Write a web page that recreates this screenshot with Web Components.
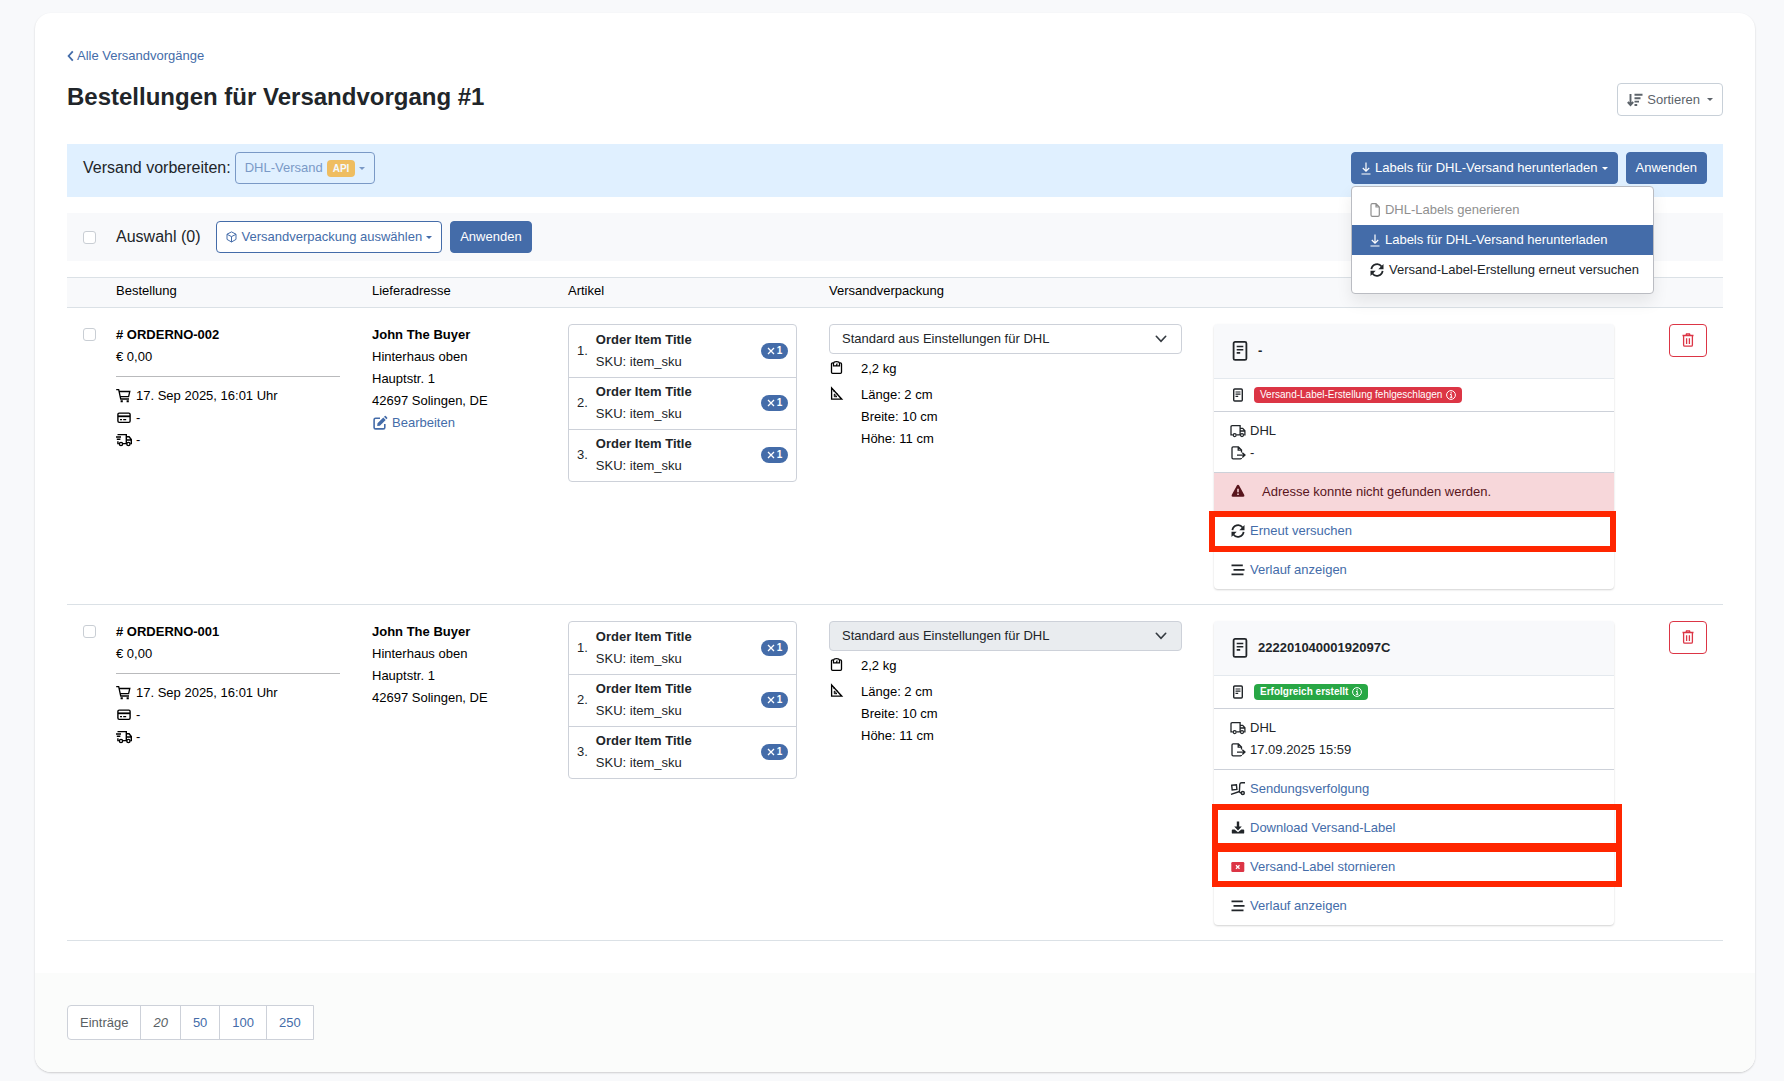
<!DOCTYPE html>
<html lang="de">
<head>
<meta charset="utf-8">
<title>Bestellungen für Versandvorgang #1</title>
<style>
  body {
    --primary: #446ca9;
    --danger: #dc3545;
    --line: #dbe1e6;
    --line-dark: #cdd1d9;
    --soft: #f8f9fb;
    margin: 0;
    padding: 13px 29px 8px 35px;
    background: #f8f9fb;
    color: #212529;
    font: 13px/22px "Liberation Sans", Arial, sans-serif;
  }
</style>
</head>
<body>
<shipping-page></shipping-page>

<script>
// [width, height, markup]
const ICONS = {
  back: [7, 12, '<path d="M5.800 1.300 1.600 6l4.200 4.700" fill="none" stroke="currentColor" stroke-width="1.800"/>'],
  sort: [16, 14, '<path d="M3.500 1v11M.8 9l2.700 3 2.700-3" fill="none" stroke="currentColor" stroke-width="1.900"/><path d="M7.500 1.800h8M7.500 5.200h6M7.500 8.600h4.500M7.500 12h2.700" stroke="currentColor" stroke-width="1.900"/>'],
  box: [11, 12, '<path d="M5.500.9 10 3.200v5.200L5.500 11 1 8.400V3.200zM1 3.300l4.500 2.300L10 3.300M5.500 5.600V11" fill="none" stroke="currentColor" stroke-width="1" stroke-linejoin="round"/>'],
  file: [10, 14, '<path d="M1 2q0-1.300 1.300-1.300H6L9.300 4v8q0 1.300-1.300 1.300H2.300Q1 13.300 1 12zM6 .7V4h3.300" fill="none" stroke="currentColor" stroke-width="1.200"/>'],
  fetch: [10, 13, '<path d="M5 .5v8.500M1.800 6 5 9.200 8.200 6M.5 12h9" fill="none" stroke="currentColor" stroke-width="1.200"/>'],
  refresh: [14, 14, '<path d="M1.400 6.200A5.700 5.700 0 0 1 11.600 3.500M12.600 7.800A5.700 5.700 0 0 1 2.400 10.500" fill="none" stroke="currentColor" stroke-width="1.800"/><path d="M13.500 1v5.200H8.300zM.5 13V7.800h5.200z" fill="currentColor"/>'],
  cart: [16, 16, '<path d="M.2 1.700h2.500l2 9.300h8.300M3.200 3.500h10.600L12.600 8.700H4.300" fill="none" stroke="currentColor" stroke-width="1.300"/><path d="M4.600 13.300h2.200M10.600 13.300h2.200" stroke="currentColor" stroke-width="2"/>'],
  payment: [16, 16, '<rect x="1.900" y="3.100" width="12.200" height="9.300" rx="1.300" fill="none" stroke="currentColor" stroke-width="1.400"/><path d="M2 6.300h12" stroke="currentColor" stroke-width="1.800"/><path d="M4 9.700h2M7.200 9.700h3" stroke="currentColor" stroke-width="1.300"/>'],
  express: [16, 16, '<path d="M1.500 2.600h8.800v9H7M0 5h5M.8 7.300h3.600M1.900 9.300v2.300h1M10.500 4.700h2.600l2.200 2.800v4.100h-1M10.500 8h4.800" fill="none" stroke="currentColor" stroke-width="1.400"/><circle cx="5" cy="12" r="1.600" fill="none" stroke="currentColor" stroke-width="1.400"/><circle cx="12.400" cy="12" r="1.600" fill="none" stroke="currentColor" stroke-width="1.400"/>'],
  truck: [16, 16, '<path d="M2.700 11.900H1V3.700Q1 2.600 2.100 2.600h8v9.300H6.700M10.100 5.300h2.600l2.200 2.500v4.100h-.8M10.100 8h4.800" fill="none" stroke="currentColor" stroke-width="1.300"/><circle cx="4.700" cy="12.100" r="1.500" fill="none" stroke="currentColor" stroke-width="1.300"/><circle cx="12" cy="12.100" r="1.500" fill="none" stroke="currentColor" stroke-width="1.300"/>'],
  edit: [16, 16, '<path d="M8 3.200H3.600q-1.500 0-1.500 1.500v7.700q0 1.500 1.500 1.500h7.700q1.500 0 1.500-1.500V9" fill="none" stroke="currentColor" stroke-width="1.600"/><path d="m5.500 8.300 5.800-5.800 2.400 2.400-5.800 5.800-2.700.4zM12 1.800l.8-.8q.5-.4 1 0l1.400 1.400q.4.500 0 1l-.8.800z" fill="currentColor"/>'],
  weight: [16, 16, '<path d="M4.300 2.900H3.600q-1.100 0-1.100 1.100v8.300q0 1.100 1.100 1.100h7.800q1.100 0 1.100-1.100V4q0-1.100-1.100-1.100h-.7" fill="none" stroke="currentColor" stroke-width="1.300"/><path d="M4.500 5.800V3.500Q4.700 1.700 7.500 1.700t3 1.800v2.300zM7.300 5.500l1-2" fill="none" stroke="currentColor" stroke-width="1.200"/>'],
  ruler: [16, 16, '<path d="M2.600 2v11.200h10.200z" fill="none" stroke="currentColor" stroke-width="1.300"/><path d="M5.300 8v2.700H8zM4.500 5.400l1.200-.8M7.200 8.300l1-1M10 11l1-1" fill="none" stroke="currentColor" stroke-width="1"/>'],
  label: [16, 22, '<rect x="1.600" y="1.900" width="12.800" height="18" rx="1.500" fill="none" stroke="currentColor" stroke-width="1.800"/><path d="M4.700 6.500h6.600M4.700 9.700h6.600M4.700 12.900h3.500" stroke="currentColor" stroke-width="1.600"/>'],
  labelsmall: [16, 16, '<rect x="3.700" y="2" width="8.600" height="12" rx="1" fill="none" stroke="currentColor" stroke-width="1.400"/><path d="M5.500 5h5M5.500 7.200h5M5.500 9.400h2.700" stroke="currentColor" stroke-width="1.200"/>'],
  info: [10, 10, '<circle cx="5" cy="5" r="4.400" fill="none" stroke="currentColor" stroke-width="1"/><path d="M4 4.500h1.300v2.800M3.800 7.300h2.600" fill="none" stroke="currentColor" stroke-width="1"/><path d="M4.500 2.800h1.300" stroke="currentColor" stroke-width="1.200"/>'],
  sent: [16, 16, '<path d="M11.500 7.500V4.900L8.400 1.800H3.100q-1.100 0-1.100 1.100v9.900q0 1.100 1.100 1.100h7.300q1.100 0 1.100-.8M8.200 2v3.200h3.300" fill="none" stroke="currentColor" stroke-width="1.300"/><path d="M7 10.100h7.300M12.300 7.700l2.600 2.400-2.600 2.400" fill="none" stroke="currentColor" stroke-width="1.400"/>'],
  warning: [16, 16, '<path d="M8 .7q.6 0 1 .6l5.300 9.800q.6 1.500-1 1.600H2.700q-1.600-.1-1-1.600L7 1.300q.4-.6 1-.6z" fill="currentColor"/><path d="M8 4.700v3.500M8 9.500V11" stroke="#f7d7da" stroke-width="1.500"/>'],
  history: [16, 16, '<path d="M1.500 3.400h11.300M3.500 7.900h11M1.500 12.400h12" stroke="currentColor" stroke-width="1.700"/>'],
  track: [16, 16, '<path d="m1.700 4.300 4.700-.6.500 4.700-4.700.6zM15 1.800h-3.300q-1.700 0-1.900 1.500l-.4 7.200q0 1.300 2.300 1.500M1 13.300l8.500-2.800" fill="none" stroke="currentColor" stroke-width="1.400"/><circle cx="12.800" cy="12" r="1.500" fill="none" stroke="currentColor" stroke-width="1.400"/>'],
  download: [16, 16, '<path d="M6.800 1.500h2.400v5h2.600L8 10.500 4.200 6.500h2.600z" fill="currentColor"/><path d="M2.700 9.500h2L8 12.300l3.300-2.800h2q.9 0 .9.700v2.700q0 .7-.9.700H2.700q-.9 0-.9-.7v-2.700q0-.7.9-.7z" fill="currentColor"/>'],
  cancel: [16, 16, '<rect x="1.300" y="3" width="13" height="10" rx="1.200" fill="#dc3545"/><path d="m6 6.300 3.500 3.500M9.500 6.300 6 9.800" stroke="#fff" stroke-width="1.300"/>'],
  trash: [12, 14, '<path d="M.5 2.500h11M4 2.500l.5-1.600h3L8 2.500" fill="none" stroke="currentColor" stroke-width="1.400"/><path d="M1.600 3v8.900q0 1.300 1.200 1.300h6.400q1.200 0 1.200-1.300V3M4.600 5.200v5.800M7.400 5.200v5.800" fill="none" stroke="currentColor" stroke-width="1.300"/>'],
  times: [8, 8, '<path d="m1 1 6 6M7 1 1 7" stroke="currentColor" stroke-width="1.300"/>'],
  chevron: [12, 8, '<path d="m1.300 1.300 4.700 5 4.700-5" fill="none" stroke="#343a40" stroke-width="1.600" stroke-linecap="round"/>'],
};

const ORDERS = [
  {
    number: 'ORDERNO-002',
    editable: true,
    tracking: '-',
    status: 'danger',
    statusText: 'Versand-Label-Erstellung fehlgeschlagen',
    sent: '-',
    error: 'Adresse konnte nicht gefunden werden.',
    actions: [
      { icon: 'refresh', text: 'Erneut versuchen', mark: '-1px -2px -2px -5px' },
      { icon: 'history', text: 'Verlauf anzeigen' },
    ],
  },
  {
    number: 'ORDERNO-001',
    editable: false,
    tracking: '22220104000192097C',
    status: 'success',
    statusText: 'Erfolgreich erstellt',
    sent: '17.09.2025 15:59',
    actions: [
      { icon: 'track', text: 'Sendungsverfolgung' },
      { icon: 'download', text: 'Download Versand-Label', mark: '-5px -8px -2px -2px' },
      { icon: 'cancel', text: 'Versand-Label stornieren', mark: '-2px -8px -1px -2px' },
      { icon: 'history', text: 'Verlauf anzeigen' },
    ],
  },
];

class AppIcon extends HTMLElement {
  constructor() {
    super();
    this.attachShadow({ mode: 'open' });
  }

  connectedCallback() {
    const [width, height, markup] = ICONS[this.getAttribute('name')];
    this.shadowRoot.innerHTML = `
      <style>
        :host { display: inline-flex; flex: none; }
        svg { display: block; }
      </style>
      <svg width="${width}" height="${height}" viewBox="0 0 ${width} ${height}" aria-hidden="true">${markup}</svg>
    `;
  }
}

class AppButton extends HTMLElement {
  constructor() {
    super();
    this.attachShadow({ mode: 'open' });
  }

  connectedCallback() {
    const disabled = this.hasAttribute('disabled') ? 'disabled' : '';
    const menu = this.hasAttribute('caret') ? 'aria-haspopup="true"' : '';
    const label = this.hasAttribute('label') ? `aria-label="${this.getAttribute('label')}"` : '';
    this.shadowRoot.innerHTML = `
      <style>
        :host { display: inline-flex; flex: none; }
        button {
          display: flex;
          align-items: center;
          gap: 4px;
          box-sizing: border-box;
          height: 32px;
          padding: 0 9px;
          border: 1px solid var(--primary);
          border-radius: 4px;
          background: #fff;
          color: var(--primary);
          font: inherit;
          white-space: nowrap;
        }
        button:disabled { opacity: 0.65; background: transparent; }
        :host([variant=primary]) button { background: var(--primary); color: #fff; }
        :host([variant=muted]) button { height: 33px; border-color: #c8d0d8; color: #5c636a; }
        :host([variant=danger]) button {
          height: 33px;
          padding: 0 12px 2px;
          border-color: var(--danger);
          color: var(--danger);
        }
        .caret {
          border: 3px solid transparent;
          border-top-color: currentColor;
          border-bottom: 0;
        }
        :host([variant=muted]) .caret { margin-left: 3px; }
      </style>
      <button type="button" ${disabled} ${menu} ${label}>
        <slot></slot>${menu ? '<span class="caret"></span>' : ''}
      </button>
    `;
  }
}

class AppCheckbox extends HTMLElement {
  constructor() {
    super();
    this.attachShadow({ mode: 'open' });
  }

  connectedCallback() {
    this.shadowRoot.innerHTML = `
      <style>
        :host { display: block; flex: none; }
        input {
          display: block;
          appearance: none;
          box-sizing: border-box;
          width: 13px;
          height: 13px;
          margin: 0;
          border: 1px solid #c9ced4;
          border-radius: 3px;
          background: #fff;
        }
        input:checked { background: var(--primary); }
      </style>
      <input type="checkbox" aria-label="${this.getAttribute('label')}">
    `;
  }
}

class ActionMenu extends HTMLElement {
  constructor() {
    super();
    this.attachShadow({ mode: 'open' });
    this.shadowRoot.innerHTML = `
      <style>
        :host { display: block; position: relative; }
        .menu {
          position: absolute;
          z-index: 2;
          top: 34px;
          left: 0;
          padding: 8px 0;
          border: 1px solid #babcc2;
          border-radius: 4px;
          background: #fff;
          box-shadow: 0 8px 16px rgba(0, 0, 0, 0.08);
        }
        .menu button {
          display: flex;
          align-items: center;
          gap: 5px;
          width: 100%;
          height: 30px;
          padding: 0 14px 0 18px;
          border: 0;
          background: none;
          color: #212529;
          font: inherit;
          white-space: nowrap;
        }
        .menu button:disabled { color: #8f8f8f; }
        .menu .active { background: var(--primary); color: #fff; }
      </style>
      <app-button variant="primary" caret><app-icon name="fetch"></app-icon> Labels für DHL-Versand herunterladen</app-button>
      <div class="menu" role="menu">
        <button type="button" role="menuitem" disabled><app-icon name="file"></app-icon>DHL-Labels generieren</button>
        <button type="button" role="menuitem" class="active"><app-icon name="fetch"></app-icon>Labels für DHL-Versand herunterladen</button>
        <button type="button" role="menuitem"><app-icon name="refresh"></app-icon>Versand-Label-Erstellung erneut versuchen</button>
      </div>
    `;
  }
}

class OrderInfo extends HTMLElement {
  constructor() {
    super();
    this.attachShadow({ mode: 'open' });
  }

  connectedCallback() {
    this.shadowRoot.innerHTML = `
      <style>
        :host { display: block; }
        hr { margin: 8px 0; border: 0; border-top: 1px solid #b9babc; }
        .line { display: flex; align-items: center; gap: 4px; }
      </style>
      <strong># ${this.getAttribute('number')}</strong>
      <div>€ 0,00</div>
      <hr>
      <div class="line"><app-icon name="cart"></app-icon>17. Sep 2025, 16:01 Uhr</div>
      <div class="line"><app-icon name="payment"></app-icon>-</div>
      <div class="line"><app-icon name="express"></app-icon>-</div>
    `;
  }
}

class AddressBlock extends HTMLElement {
  constructor() {
    super();
    this.attachShadow({ mode: 'open' });
  }

  connectedCallback() {
    this.shadowRoot.innerHTML = `
      <style>
        :host { display: block; }
        a { display: flex; align-items: center; gap: 4px; color: var(--primary); text-decoration: none; }
      </style>
      <strong>John The Buyer</strong>
      <div>Hinterhaus oben</div>
      <div>Hauptstr. 1</div>
      <div>42697 Solingen, DE</div>
      ${this.hasAttribute('editable') ? '<a href="#"><app-icon name="edit"></app-icon>Bearbeiten</a>' : ''}
    `;
  }
}

class ArticleList extends HTMLElement {
  constructor() {
    super();
    this.attachShadow({ mode: 'open' });
    const items = [1, 2, 3].map((pos) => `
      <li>
        <span>${pos}.</span>
        <div class="text"><strong>Order Item Title</strong><div>SKU: item_sku</div></div>
        <span class="badge"><app-icon name="times"></app-icon>1</span>
      </li>
    `).join('');
    this.shadowRoot.innerHTML = `
      <style>
        :host { display: block; color: #212529; }
        ul { margin: 0; padding: 0; list-style: none; border: 1px solid var(--line-dark); border-radius: 4px; }
        li { display: flex; align-items: center; gap: 8px; padding: 4px 8px; }
        li + li { padding-top: 3px; border-top: 1px solid var(--line-dark); }
        .text { flex: 1; }
        .badge {
          display: flex;
          align-items: center;
          justify-content: center;
          gap: 2px;
          width: 27px;
          height: 16px;
          border-radius: 8px;
          background: var(--primary);
          color: #fff;
          font-size: 10px;
          font-weight: bold;
        }
      </style>
      <ul>${items}</ul>
    `;
  }
}

class PackagingInfo extends HTMLElement {
  constructor() {
    super();
    this.attachShadow({ mode: 'open' });
  }

  connectedCallback() {
    const disabled = this.hasAttribute('disabled') ? 'disabled' : '';
    this.shadowRoot.innerHTML = `
      <style>
        :host { display: block; }
        .select { position: relative; margin-bottom: 4px; }
        select {
          display: block;
          appearance: none;
          box-sizing: border-box;
          width: 100%;
          height: 30px;
          padding: 0 36px 0 12px;
          border: 1px solid var(--line-dark);
          border-radius: 4px;
          background: #fff;
          color: #212529;
          font: inherit;
        }
        select:disabled { background: #e9ecef; opacity: 1; }
        .select app-icon { position: absolute; top: 11px; right: 15px; pointer-events: none; }
        .line { display: flex; gap: 16px; margin-bottom: 4px; }
        .line app-icon { padding-top: 2px; }
      </style>
      <div class="select">
        <select aria-label="Versandverpackung" ${disabled}><option>Standard aus Einstellungen für DHL</option></select>
        <app-icon name="chevron"></app-icon>
      </div>
      <div class="line"><app-icon name="weight"></app-icon><div>2,2 kg</div></div>
      <div class="line">
        <app-icon name="ruler"></app-icon>
        <div><div>Länge: 2 cm</div><div>Breite: 10 cm</div><div>Höhe: 11 cm</div></div>
      </div>
    `;
  }
}

class ShipmentCard extends HTMLElement {
  constructor() {
    super();
    this.attachShadow({ mode: 'open' });
  }

  /**
   * @param {any} value
   */
  set order(value) {
    const error = value.error
      ? `<div class="row alert"><app-icon name="warning"></app-icon>${value.error}</div>` : '';
    const actions = value.actions.map((action) => `
      <div class="row">
        <app-icon name="${action.icon}"></app-icon><a href="#">${action.text}</a>
        ${action.mark ? `<span class="mark" style="inset: ${action.mark}"></span>` : ''}
      </div>
    `).join('');
    this.shadowRoot.innerHTML = `
      <style>
        :host {
          display: block;
          border-radius: 4px;
          background: #fff;
          color: #212529;
          box-shadow: 0 1px 2px rgba(0, 0, 0, 0.18);
        }
        .head, .status, .row, .line { display: flex; align-items: center; }
        .head {
          gap: 10px;
          padding: 16px 16px 16px 18px;
          border-bottom: 1px solid #e4e9ee;
          border-radius: 4px 4px 0 0;
          background: var(--soft);
          font-weight: bold;
        }
        .status { gap: 8px; padding: 8px 16px; border-bottom: 1px solid var(--line-dark); }
        .badge {
          display: flex;
          align-items: center;
          gap: 4px;
          height: 16px;
          padding: 0 6px;
          border-radius: 4px;
          background: var(--danger);
          color: #fff;
          font-size: 10px;
        }
        .badge.success { background: #28a745; font-weight: bold; }
        .carrier { padding: 8px 16px; border-bottom: 1px solid var(--line-dark); }
        .line { gap: 4px; }
        .row { position: relative; gap: 4px; padding: 8px 16px; }
        .row + .row { border-top: 1px solid transparent; }
        .row app-icon { width: 16px; justify-content: center; }
        .alert { gap: 16px; background: #f7d7da; color: #58151c; }
        a { color: var(--primary); text-decoration: none; }
        .mark { position: absolute; z-index: 1; border: 6px solid #ff2600; pointer-events: none; }
      </style>
      <div class="head"><app-icon name="label"></app-icon>${value.tracking}</div>
      <div class="status">
        <app-icon name="labelsmall"></app-icon>
        <span class="badge ${value.status}">${value.statusText}<app-icon name="info"></app-icon></span>
      </div>
      <div class="carrier">
        <div class="line"><app-icon name="truck"></app-icon>DHL</div>
        <div class="line"><app-icon name="sent"></app-icon>${value.sent}</div>
      </div>
      ${error}${actions}
    `;
  }
}

class OrderTable extends HTMLElement {
  constructor() {
    super();
    this.attachShadow({ mode: 'open' });
    this.shadowRoot.innerHTML = `
      <style>
        :host { display: block; color: #000; }
        table { width: 100%; table-layout: fixed; border-collapse: separate; border-spacing: 0; }
        th {
          padding: 2px 16px 5px;
          border-top: 1px solid var(--line);
          border-bottom: 1px solid var(--line);
          background: var(--soft);
          font-weight: normal;
          text-align: left;
        }
        td { padding: 16px 16px 15px; border-bottom: 1px solid var(--line); vertical-align: top; }
        td:first-child { padding: 20px 0 0 16px; }
        td:last-child { text-align: right; }
      </style>
      <table>
        <colgroup>
          <col style="width: 33px"><col style="width: 256px"><col style="width: 196px">
          <col style="width: 261px"><col style="width: 385px"><col style="width: 432px"><col style="width: 93px">
        </colgroup>
        <thead>
          <tr><th></th><th>Bestellung</th><th>Lieferadresse</th><th>Artikel</th><th>Versandverpackung</th><th></th><th></th></tr>
        </thead>
        <tbody></tbody>
      </table>
    `;
    this.$body = this.shadowRoot.querySelector('tbody');
  }

  connectedCallback() {
    ORDERS.forEach((order) => {
      const row = document.createElement('tr');
      row.innerHTML = `
        <td><app-checkbox label="${order.number}"></app-checkbox></td>
        <td><order-info number="${order.number}"></order-info></td>
        <td><address-block ${order.editable ? 'editable' : ''}></address-block></td>
        <td><article-list></article-list></td>
        <td><packaging-info ${order.editable ? '' : 'disabled'}></packaging-info></td>
        <td><shipment-card></shipment-card></td>
        <td><app-button variant="danger" label="Löschen"><app-icon name="trash"></app-icon></app-button></td>
      `;
      this.$body.appendChild(row);
      row.querySelector('shipment-card').order = order;
    });
  }
}

class PageSize extends HTMLElement {
  constructor() {
    super();
    this.attachShadow({ mode: 'open' });
    this.shadowRoot.innerHTML = `
      <style>
        :host { display: flex; }
        ul {
          display: flex;
          margin: 0;
          padding: 0;
          list-style: none;
          border: 1px solid var(--line-dark);
          border-radius: 4px 0 0 4px;
          background: #fff;
          color: #5a5f64;
          line-height: 33px;
        }
        li { padding: 0 12px; }
        li + li { border-left: 1px solid var(--line-dark); }
        a { color: var(--primary); text-decoration: none; }
      </style>
      <ul>
        <li>Einträge</li>
        <li><em>20</em></li>
        <li><a href="#">50</a></li>
        <li><a href="#">100</a></li>
        <li><a href="#">250</a></li>
      </ul>
    `;
  }
}

const template = document.createElement('template');
template.innerHTML = `
  <style>
    :host {
      display: block;
      border-radius: 16px;
      background: #fff;
      box-shadow: 0 1px 2px rgba(0, 0, 0, 0.18);
    }
    main { padding: 32px; }
    .back { display: inline-flex; align-items: center; gap: 3px; color: var(--primary); text-decoration: none; }
    header { display: flex; justify-content: space-between; margin: 14px 0 28px; }
    h1 { margin: 0; font-size: 24px; line-height: 28px; }
    .bar {
      display: flex;
      align-items: flex-start;
      gap: 8px;
      box-sizing: border-box;
      margin-bottom: 16px;
      padding: 8px 16px;
      font-size: 16px;
      line-height: 32px;
    }
    .bar app-button, .bar action-menu { font-size: 13px; line-height: 22px; }
    .prepare { min-height: 53px; background: #e0f0ff; }
    .prepare .title { flex: 1; display: flex; gap: 4px; }
    .selection { align-items: center; background: var(--soft); }
    .selection .title { margin: 0 8px 0 12px; }
    .api {
      padding: 0 6px;
      border-radius: 4px;
      background: #f7a30c;
      color: #fff;
      font-size: 10px;
      font-weight: bold;
      line-height: 17px;
    }
    footer { padding: 32px; border-radius: 0 0 16px 16px; background: #fbfcfb; }
  </style>
  <main>
    <a class="back" href="#"><app-icon name="back"></app-icon>Alle Versandvorgänge</a>
    <header>
      <h1>Bestellungen für Versandvorgang #1</h1>
      <app-button variant="muted" caret><app-icon name="sort"></app-icon>Sortieren</app-button>
    </header>
    <div class="bar prepare">
      <div class="title">Versand vorbereiten:
        <app-button disabled caret>DHL-Versand <span class="api">API</span></app-button>
      </div>
      <action-menu></action-menu>
      <app-button variant="primary">Anwenden</app-button>
    </div>
    <div class="bar selection">
      <app-checkbox label="Alle auswählen"></app-checkbox>
      <span class="title">Auswahl (0)</span>
      <app-button caret><app-icon name="box"></app-icon>Versandverpackung auswählen</app-button>
      <app-button variant="primary">Anwenden</app-button>
    </div>
    <order-table></order-table>
  </main>
  <footer><page-size></page-size></footer>
`;

class ShippingPage extends HTMLElement {
  constructor() {
    super();
    this._shadowRoot = this.attachShadow({ mode: 'open' });
    this._shadowRoot.appendChild(template.content.cloneNode(true));
  }
}

customElements.define('app-icon', AppIcon);
customElements.define('app-button', AppButton);
customElements.define('app-checkbox', AppCheckbox);
customElements.define('action-menu', ActionMenu);
customElements.define('order-info', OrderInfo);
customElements.define('address-block', AddressBlock);
customElements.define('article-list', ArticleList);
customElements.define('packaging-info', PackagingInfo);
customElements.define('shipment-card', ShipmentCard);
customElements.define('order-table', OrderTable);
customElements.define('page-size', PageSize);
customElements.define('shipping-page', ShippingPage);
</script>
</body>
</html>
